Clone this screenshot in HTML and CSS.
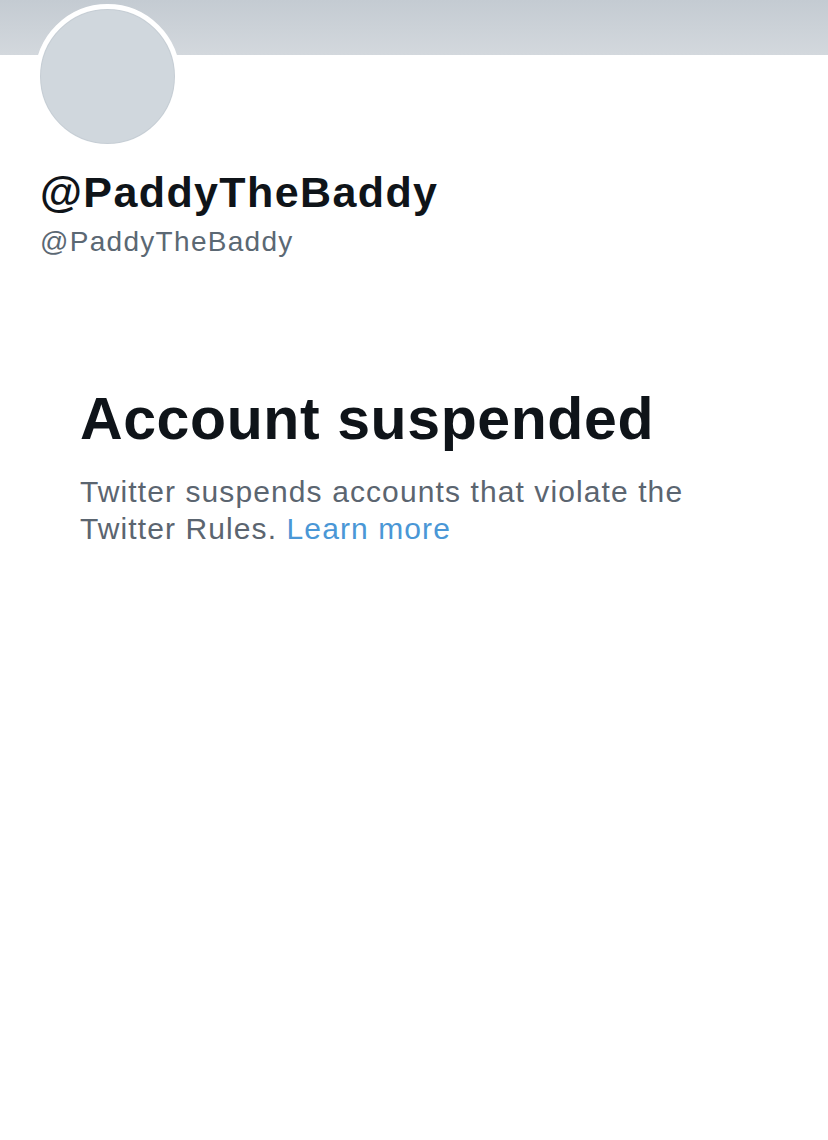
FILE: index.html
```html
<!DOCTYPE html>
<html lang="en">
<head>
<meta charset="utf-8">
<title>@PaddyTheBaddy</title>
<link rel="stylesheet" href="styles.css">
</head>
<body>
  <main class="profile">
    <div class="banner"></div>
    <section class="identity">
      <div class="avatar"></div>
      <h1 class="display-name">@PaddyTheBaddy</h1>
      <p class="handle">@PaddyTheBaddy</p>
    </section>
    <section class="notice">
      <h2 class="notice-title">Account suspended</h2>
      <p class="notice-text">Twitter suspends accounts that violate the Twitter Rules. <a class="notice-link" href="#">Learn more</a></p>
    </section>
  </main>
</body>
</html>
```

FILE: styles.css
```css
html, body {
  margin: 0;
  padding: 0;
  background: #ffffff;
}

body {
  font-family: "Liberation Sans", Arial, sans-serif;
  width: 828px;
  height: 1140px;
  overflow: hidden;
}

.profile {
  display: flex;
  flex-direction: column;
}

/* header image strip */
.banner {
  height: 55px;
  background: linear-gradient(180deg, #c4cbd2 0%, #d3d8dd 100%);
}

.identity {
  display: flex;
  flex-direction: column;
  align-items: flex-start;
  padding-left: 40px;
}

/* default avatar, ringed in white and overlapping the banner */
.avatar {
  width: 135px;
  height: 135px;
  margin-top: -51px;
  margin-left: -5px;
  border: 5px solid #ffffff;
  border-radius: 50%;
  background: #d0d7dd;
  box-shadow: inset 0 0 0 1px rgba(180, 190, 198, 0.35);
}

.display-name {
  margin: 19px 0 0;
  font-size: 43px;
  line-height: 48px;
  font-weight: 700;
  letter-spacing: 1.4px;
  color: #0f1419;
}

.handle {
  margin: 10px 0 0;
  font-size: 28px;
  line-height: 32px;
  letter-spacing: 1.3px;
  color: #5b6873;
}

.notice {
  display: flex;
  flex-direction: column;
  padding-left: 80px;
  margin-top: 127px;
  max-width: 660px;
}

.notice-title {
  margin: 0;
  font-size: 59px;
  line-height: 68px;
  font-weight: 700;
  letter-spacing: 0.6px;
  color: #0f1419;
}

.notice-text {
  margin: 20px 0 0;
  font-size: 30px;
  line-height: 37px;
  letter-spacing: 1.1px;
  color: #5b6570;
}

.notice-link {
  color: #4a97d6;
  text-decoration: none;
}
```
